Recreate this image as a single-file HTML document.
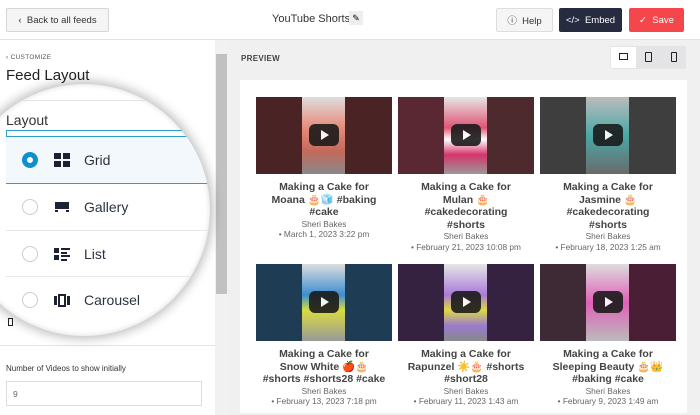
<!DOCTYPE html><html><head><meta charset="utf-8"><style>
*{margin:0;padding:0;box-sizing:border-box}
body{width:700px;height:415px;overflow:hidden;font-family:"Liberation Sans",sans-serif;background:#fff;position:relative}
.a{position:absolute}
.btn{position:absolute;height:24px;border-radius:2px;font-size:9.5px;display:flex;align-items:center;justify-content:center}
.th{position:absolute;width:136px;height:77px;overflow:hidden}
.th .s{position:absolute;top:0;height:100%}
.play{position:absolute;left:53px;top:27px;width:30px;height:22px;background:#1b1b1b;border-radius:6px;opacity:.9}
.play:after{content:"";position:absolute;left:12px;top:6px;border-left:8px solid #fff;border-top:5px solid transparent;border-bottom:5px solid transparent}
.cap{position:absolute;width:150px;text-align:center;color:#444;font-size:10.5px;font-weight:bold;line-height:12.6px}
.cap small{display:block;font-weight:normal;color:#666;font-size:8.3px;line-height:10.5px}
.row{position:absolute;left:6px;width:210px;height:46px;border-top:1px solid #e8e8e8;display:flex;align-items:center;font-size:14px;color:#2c3340}
.rad{width:16px;height:16px;border-radius:50%;border:1.5px solid #ccc;margin-left:16px;margin-right:16px}
.ic{width:16px;height:14px;margin-right:14px;position:relative}
</style></head><body>
<div class="btn" style="left:6px;top:8px;width:103px;border:1px solid #d6d6d6;background:#f5f5f6;color:#333">‹&nbsp;&nbsp;Back to all feeds</div>
<div class="a" style="left:272px;top:13px;font-size:11px;color:#333">YouTube Shorts</div>
<div class="a" style="left:349px;top:11px;width:14px;height:14px;background:#eee;font-size:9px;text-align:center;line-height:14px">✎</div>
<div class="btn" style="left:496px;top:8px;width:57px;border:1px solid #ddd;background:#f5f5f6;color:#333">ⓘ&nbsp; Help</div>
<div class="btn" style="left:559px;top:8px;width:63px;background:#262b40;color:#fff">&lt;/&gt;&nbsp; Embed</div>
<div class="btn" style="left:629px;top:8px;width:55px;background:#f4464b;color:#fff">✓&nbsp; Save</div>
<div class="a" style="left:0;top:39px;width:700px;height:1px;background:#e2e2e2"></div>
<div class="a" style="left:228px;top:40px;width:472px;height:375px;background:#f0f0f1"></div>
<div class="a" style="left:241px;top:54px;font-size:8px;font-weight:bold;color:#444;letter-spacing:.3px">PREVIEW</div>
<div class="a" style="left:610px;top:46px;width:76px;height:23px;background:#e4e4e6;border-radius:2px"></div>
<div class="a" style="left:611px;top:47px;width:25px;height:21px;background:#fff"></div>
<div class="a" style="left:619px;top:53px;width:9px;height:7px;border:1.5px solid #222"></div>
<div class="a" style="left:645px;top:52px;width:7px;height:10px;border:1.5px solid #222;border-radius:1px"></div>
<div class="a" style="left:671px;top:52px;width:6px;height:10px;border:1.5px solid #222;border-radius:1px"></div>
<div class="a" style="left:240px;top:80px;width:447px;height:333px;background:#fff"></div>
<div class="th" style="left:256px;top:97px;background:#4a2325"><div class="s" style="left:46px;width:43px;background:linear-gradient(#ddd,#e88a7a 40%,#c46a5c 70%,#888)"></div><div class="play"></div></div>
<div class="th" style="left:398px;top:97px;background:#4d2a2e"><div class="s" style="left:0;width:46px;background:#5a2832"></div><div class="s" style="left:46px;width:43px;background:linear-gradient(#e6e6e6,#e05575 40%,#fff 55%,#d4356a 75%,#999)"></div><div class="play"></div></div>
<div class="th" style="left:540px;top:97px;background:#3e3e3e"><div class="s" style="left:46px;width:43px;background:linear-gradient(#bbb,#4aa8a8 50%,#6a6a6a)"></div><div class="play"></div></div>
<div class="th" style="left:256px;top:264px;background:#1f3c55"><div class="s" style="left:46px;width:43px;background:linear-gradient(#ddd,#3d8dd0 40%,#d8dc40 60%,#999)"></div><div class="play"></div></div>
<div class="th" style="left:398px;top:264px;background:#352240"><div class="s" style="left:46px;width:43px;background:linear-gradient(#e6e6e6,#a97ad8 40%,#e0d840 60%,#9a7ad0 80%,#888)"></div><div class="play"></div></div>
<div class="th" style="left:540px;top:264px;background:#3d2a34"><div class="s" style="left:46px;width:43px;background:linear-gradient(#ddd,#e060b8 50%,#bbb)"></div><div class="s" style="left:89px;width:47px;background:#4a1f35"></div><div class="play"></div></div>
<div class="cap" style="left:249px;top:181px">Making a Cake for<br>Moana 🎂🧊 #baking<br>#cake<small>Sheri Bakes<br>• March 1, 2023 3:22 pm</small></div>
<div class="cap" style="left:391px;top:181px">Making a Cake for<br>Mulan 🎂<br>#cakedecorating<br>#shorts<small>Sheri Bakes<br>• February 21, 2023 10:08 pm</small></div>
<div class="cap" style="left:533px;top:181px">Making a Cake for<br>Jasmine 🎂<br>#cakedecorating<br>#shorts<small>Sheri Bakes<br>• February 18, 2023 1:25 am</small></div>
<div class="cap" style="left:249px;top:348px">Making a Cake for<br>Snow White 🍎🎂<br>#shorts #shorts28 #cake<small>Sheri Bakes<br>• February 13, 2023 7:18 pm</small></div>
<div class="cap" style="left:391px;top:348px">Making a Cake for<br>Rapunzel ☀️🎂 #shorts<br>#short28<small>Sheri Bakes<br>• February 11, 2023 1:43 am</small></div>
<div class="cap" style="left:533px;top:348px">Making a Cake for<br>Sleeping Beauty 🎂👑<br>#baking #cake<small>Sheri Bakes<br>• February 9, 2023 1:49 am</small></div>
<div class="a" style="left:215px;top:40px;width:13px;height:375px;background:#f1f1f1"></div>
<div class="a" style="left:216px;top:54px;width:11px;height:240px;background:#c1c1c1"></div>
<div class="a" style="left:6px;top:54px;font-size:6.5px;color:#555;letter-spacing:.3px">‹ CUSTOMIZE</div>
<div class="a" style="left:6px;top:67px;font-size:15px;color:#222">Feed Layout</div>
<div class="a" style="left:0;top:345px;width:215px;height:1px;background:#e4e4e4"></div>
<div class="a" style="left:6px;top:364px;font-size:8px;color:#333">Number of Videos to show initially</div>
<div class="a" style="left:6px;top:381px;width:196px;height:25px;border:1px solid #ddd;font-size:8.5px;color:#666;padding:7px 6px">9</div>
<div class="a" style="left:8px;top:318px;width:5px;height:8px;border:1.5px solid #222"></div>
<div class="a" style="left:-42px;top:84px;width:252px;height:252px;border-radius:50%;background:#fff;box-shadow:0 0 10px 3px rgba(0,0,0,.25),inset 0 0 6px rgba(0,0,0,.15);overflow:hidden">
 <div class="a" style="left:42px;top:0;width:220px;height:252px">
  <div class="a" style="left:0;top:16px;width:220px;height:1px;background:#e4e4e4"></div>
  <div class="a" style="left:6px;top:28px;font-size:14px;font-weight:500;color:#333">Layout</div>
  <div class="a" style="left:6px;top:46px;width:196px;height:26px;border:1px solid #2a9fd0"></div>
  <div class="row" style="top:52px;background:#f3f8fc;border:1px solid #2a9fd0;border-left:none;height:48px;left:6px"><div class="rad" style="border:5px solid #0e8fd0;background:#fff"></div><div class="ic"><div class="a" style="left:0;top:0;width:7px;height:6px;background:#1c2233"></div><div class="a" style="left:9px;top:0;width:7px;height:6px;background:#1c2233"></div><div class="a" style="left:0;top:8px;width:7px;height:6px;background:#1c2233"></div><div class="a" style="left:9px;top:8px;width:7px;height:6px;background:#1c2233"></div></div>Grid</div>
  <div class="row" style="top:100px;border-top:none"><div class="rad"></div><div class="ic"><div class="a" style="left:1px;top:2px;width:14px;height:7px;background:#1c2233"></div><div class="a" style="left:1px;top:10px;width:14px;height:2px;border-left:3px solid #1c2233;border-right:3px solid #1c2233"></div></div>Gallery</div>
  <div class="row" style="top:146px"><div class="rad"></div><div class="ic"><div class="a" style="left:0;top:1px;width:5px;height:5px;background:#1c2233"></div><div class="a" style="left:0;top:8px;width:5px;height:5px;background:#1c2233"></div><div class="a" style="left:7px;top:1px;width:9px;height:2px;background:#1c2233"></div><div class="a" style="left:7px;top:5px;width:6px;height:2px;background:#1c2233"></div><div class="a" style="left:7px;top:8px;width:9px;height:2px;background:#1c2233"></div><div class="a" style="left:7px;top:12px;width:6px;height:2px;background:#1c2233"></div></div>List</div>
  <div class="row" style="top:192px"><div class="rad"></div><div class="ic"><div class="a" style="left:0;top:3px;width:3px;height:9px;background:#1c2233"></div><div class="a" style="left:4px;top:1px;width:8px;height:13px;border:2px solid #1c2233"></div><div class="a" style="left:13px;top:3px;width:3px;height:9px;background:#1c2233"></div></div>Carousel</div>
 </div>
</div>
</body></html>
